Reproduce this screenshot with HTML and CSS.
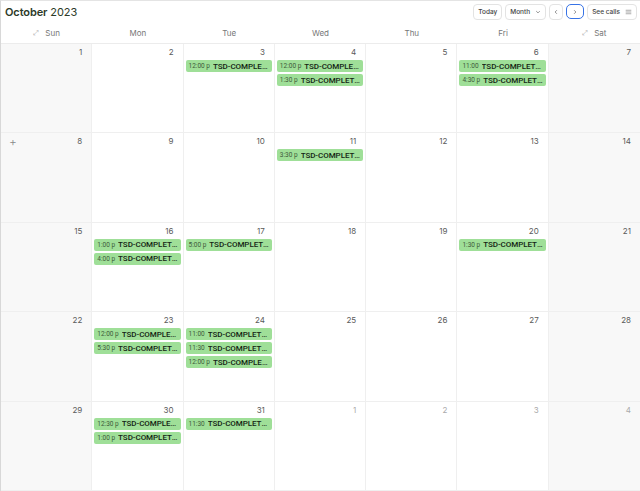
FILE: index.html
```html
<!DOCTYPE html>
<html lang="en">
<head>
    <meta charset="UTF-8">
    <meta name="viewport" content="width=device-width, initial-scale=1.0">
    <title>Calendar</title>
    <link rel="stylesheet" href="styles.css">
</head>
<body>

<div class="calendar">
    <div class="toolbar">
        <h1 class="title"><strong>October</strong> 2023</h1>
        <div class="actions">
            <button class="btn">Today</button>
            <button class="btn">Month
                <svg width="6" height="6" viewBox="0 0 10 10"><path d="M2 3.5l3 3 3-3" fill="none" stroke="#777" stroke-width="1.3"/></svg>
            </button>
            <button class="btn btn-icon">
                <svg width="6" height="6" viewBox="0 0 10 10"><path d="M6.5 2l-3 3 3 3" fill="none" stroke="#777" stroke-width="1.3"/></svg>
            </button>
            <button class="btn btn-icon btn-focus">
                <svg width="6" height="6" viewBox="0 0 10 10"><path d="M3.5 2l3 3-3 3" fill="none" stroke="#777" stroke-width="1.3"/></svg>
            </button>
            <button class="btn">See calls
                <svg width="7" height="6" viewBox="0 0 10 8"><path d="M1 1.5h8M1 4h8M1 6.5h8" fill="none" stroke="#888" stroke-width="1"/></svg>
            </button>
        </div>
    </div>

    <div class="weekdays">
        <div class="weekday"><span class="expand">⤢</span>Sun</div>
        <div class="weekday">Mon</div>
        <div class="weekday">Tue</div>
        <div class="weekday">Wed</div>
        <div class="weekday">Thu</div>
        <div class="weekday">Fri</div>
        <div class="weekday"><span class="expand">⤢</span>Sat</div>
    </div>

    <div class="month" id="month"></div>
</div>

<script>
    const events = {
        3: ["12:00 p"],
        4: ["12:00 p", "1:30 p"],
        6: ["11:00", "4:30 p"],
        11: ["3:30 p"],
        16: ["1:00 p", "4:00 p"],
        17: ["5:00 p"],
        20: ["1:30 p"],
        23: ["12:00 p", "5:30 p"],
        24: ["11:00", "11:30", "12:00 p"],
        30: ["12:30 p", "1:00 p"],
        31: ["11:30"]
    };

    const month = document.getElementById("month");

    for (let i = 0; i < 35; i++) {
        const day = i < 31 ? i + 1 : i - 30;
        const outside = i >= 31;
        const col = i % 7;

        const cell = document.createElement("div");
        cell.className = "day";
        if (col === 0 || col === 6) cell.classList.add("weekend");
        if (outside) cell.classList.add("outside");

        let html = '<div class="day-head">';
        if (i === 7) html += '<span class="add">+</span>';
        html += '<span class="num">' + day + '</span></div>';

        if (!outside && events[day]) {
            events[day].forEach(function (time) {
                html += '<div class="event"><span class="time">' + time + '</span><span class="name">TSD-COMPLETED</span></div>';
            });
        }

        cell.innerHTML = html;
        month.appendChild(cell);
    }
</script>

</body>
</html>
```

FILE: styles.css
```css
* {
    box-sizing: border-box;
}
body {
    margin: 0;
    font-family: Inter, "Liberation Sans", sans-serif;
    background-color: #fff;
    color: #333;
}
.calendar {
    height: 100vh;
    display: flex;
    flex-direction: column;
    border-top: 1px solid #e4e4e4;
    border-left: 1px solid #d8d8d8;
}
.toolbar {
    height: 21px;
    display: flex;
    align-items: center;
    justify-content: space-between;
    padding: 0 3px 0 4px;
}
.title {
    margin: 0;
    font-size: 11px;
    font-weight: 400;
    color: #2c3a28;
    letter-spacing: -0.1px;
}
.title strong {
    font-weight: 600;
}
.actions {
    display: flex;
    gap: 3px;
    align-items: center;
}
.btn {
    height: 16px;
    padding: 0 4px;
    border: 1px solid #e3e3e3;
    border-radius: 4px;
    background-color: #fff;
    font-family: inherit;
    font-size: 6.5px;
    font-weight: 500;
    color: #444;
    display: flex;
    align-items: center;
    gap: 5px;
}
.btn-icon {
    width: 14px;
    padding: 0;
    justify-content: center;
}
.btn-focus {
    width: 18px;
    height: 15px;
    border: 1.5px solid #3773e6;
    border-radius: 5px;
}
.weekdays {
    height: 22px;
    display: grid;
    grid-template-columns: repeat(7, 1fr);
    border-bottom: 1px solid #ececec;
}
.weekday {
    display: flex;
    align-items: center;
    justify-content: center;
    font-size: 8px;
    color: #777;
}
.expand {
    font-size: 7px;
    color: #aaa;
    margin-right: 6px;
}
.month {
    flex: 1;
    display: grid;
    grid-template-columns: repeat(7, 1fr);
    grid-template-rows: repeat(5, 1fr);
}
.day {
    border-right: 1px solid #efefef;
    border-bottom: 1px solid #efefef;
    padding: 0 2px;
    min-width: 0;
    overflow: hidden;
}
.day:nth-child(7n) {
    border-right: none;
}
.weekend {
    background-color: #f8f8f8;
}
.day-head {
    height: 16px;
    display: flex;
    align-items: center;
    justify-content: flex-end;
    padding: 0 7px 0 6px;
}
.num {
    font-size: 8px;
    color: #5a5a5a;
}
.outside .num {
    color: #aaa;
}
.add {
    margin-right: auto;
    font-size: 12px;
    font-weight: 300;
    color: #888;
}
.event {
    height: 12px;
    margin-bottom: 2px;
    padding: 0 3px;
    border-radius: 2px;
    background-color: #9fdf98;
    display: flex;
    align-items: center;
    gap: 3px;
    white-space: nowrap;
    overflow: hidden;
    font-family: Roboto, "Liberation Sans", sans-serif;
}
.time {
    flex-shrink: 0;
    font-size: 6.5px;
    color: #3d5a3a;
}
.name {
    min-width: 0;
    font-size: 8px;
    font-weight: 500;
    letter-spacing: -0.05px;
    color: #142414;
    overflow: hidden;
    text-overflow: ellipsis;
}
```
